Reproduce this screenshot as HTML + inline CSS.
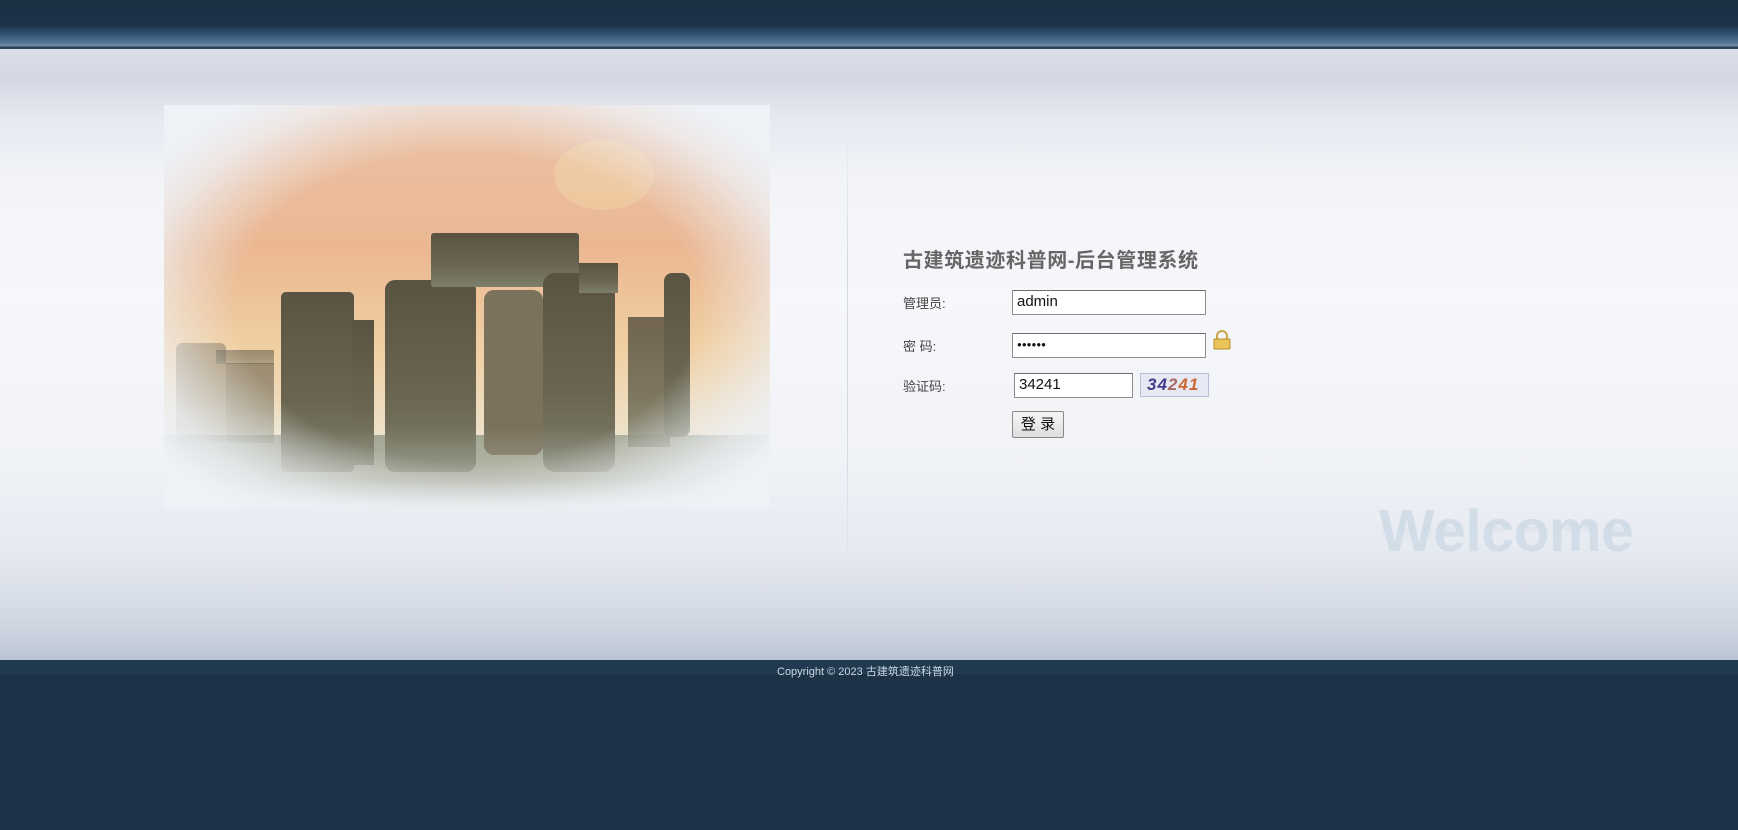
<!DOCTYPE html>
<html><head><meta charset="utf-8"><style>
*{margin:0;padding:0;box-sizing:border-box}
body{width:1738px;height:830px;overflow:hidden;background:#1d3246;font-family:"Liberation Sans","Noto Sans CJK SC",sans-serif;position:relative}
.top{position:absolute;left:0;top:0;width:1738px;height:49px;background:linear-gradient(#1c3044 0,#1d3246 25px,#2f4d6a 33px,#4f7293 42px,#6f8ea9 46px,#2c4256 47px,#2c4256 49px)}
.main{position:absolute;left:0;top:49px;width:1738px;height:611px;background:linear-gradient(#dadfe8 0,#d3d8e3 30px,#e6e9f0 70px,#f2f4f8 130px,#f6f7fa 250px,#f1f3f7 400px,#e6eaf1 500px,#d2d8e3 570px,#bcc5d4 611px)}
.div{position:absolute;left:847px;top:120px;width:1px;height:470px;background:linear-gradient(rgba(200,208,220,0),#d4dae3 30%,#d4dae3 70%,rgba(200,208,220,0))}
.foot{position:absolute;left:0;top:660px;width:1738px;height:14px;background:#223a50}
.copy{position:absolute;left:777px;top:663px;font-size:11px;color:#c9d6e2}
.title{position:absolute;left:903px;top:244px;font-size:20px;font-weight:bold;color:#666;letter-spacing:0.6px}
.lab{position:absolute;left:903px;font-size:13px;color:#444}
.inp{position:absolute;background:#fff;border:1px solid #8d8d8d;border-top-color:#6f6f6f;font-size:15px;color:#111;padding-left:4px;line-height:22px;height:25px}
.btn{position:absolute;left:1012px;top:411px;width:52px;height:27px;border:1px solid #8a8a8a;border-radius:2px;background:linear-gradient(#f6f6f6,#dedede);font-size:15px;text-align:center;line-height:25px;color:#111}
.welcome{position:absolute;left:1379px;top:497px;font-size:59px;font-weight:bold;color:#d2dde8;letter-spacing:-0.5px}
.refl{position:absolute;left:1379px;top:554px;font-size:59px;font-weight:bold;color:#cad8e6;transform:scaleY(-1);transform-origin:0 0;opacity:.5;letter-spacing:-0.5px;height:30px;overflow:hidden;-webkit-mask-image:linear-gradient(to top,rgba(0,0,0,.8),rgba(0,0,0,0) 60%)}
</style></head><body>
<div class="top"></div>
<div class="main"></div>
<div class="div"></div>
<svg style="position:absolute;left:164px;top:105px" width="606" height="403" viewBox="0 0 606 403">
<defs>
<linearGradient id="sky" x1="0" y1="0" x2="0" y2="1"><stop offset="0" stop-color="#ecc3a8"/><stop offset=".35" stop-color="#ebb792"/><stop offset=".6" stop-color="#f0cfa2"/><stop offset=".8" stop-color="#ede0c6"/><stop offset="1" stop-color="#e6e2d2"/></linearGradient>
<linearGradient id="st" x1="0" y1="0" x2="0" y2="1"><stop offset="0" stop-color="#5a5342"/><stop offset=".6" stop-color="#6a6550"/><stop offset="1" stop-color="#7d7f6a"/></linearGradient>
<radialGradient id="vig" cx=".5" cy=".5" r=".62"><stop offset=".62" stop-color="#eef1f6" stop-opacity="0"/><stop offset=".88" stop-color="#eef1f6" stop-opacity=".8"/><stop offset="1" stop-color="#eef1f6" stop-opacity="1"/></radialGradient>
<linearGradient id="fog" x1="0" y1="0" x2="0" y2="1"><stop offset=".8" stop-color="#e8ebef" stop-opacity="0"/><stop offset=".93" stop-color="#dfe3e4" stop-opacity=".3"/><stop offset="1" stop-color="#eef1f6" stop-opacity=".9"/></linearGradient>
</defs>
<rect width="606" height="403" fill="url(#sky)"/>
<ellipse cx="440" cy="70" rx="50" ry="35" fill="#f6dcaa" opacity=".4"/>
<rect x="0" y="330" width="606" height="73" fill="#a1a48e"/>
<g fill="url(#st)">
<rect x="12" y="238" width="50" height="100" rx="6" opacity=".45"/>
<rect x="52" y="245" width="58" height="14" opacity=".55"/>
<rect x="62" y="258" width="48" height="80" opacity=".55"/>
<rect x="117" y="187" width="73" height="180" rx="5"/>
<rect x="188" y="215" width="22" height="145"/>
<rect x="221" y="175" width="91" height="192" rx="10"/>
<rect x="267" y="128" width="148" height="54" rx="3"/>
<rect x="320" y="185" width="59" height="165" rx="10" fill="#7a725c"/>
<rect x="379" y="168" width="72" height="199" rx="12"/>
<rect x="415" y="158" width="39" height="30"/>
<rect x="464" y="212" width="42" height="130" opacity=".85"/>
<rect x="500" y="168" width="26" height="164" rx="8"/>
</g>
<rect width="606" height="403" fill="url(#fog)"/>
<rect width="606" height="403" fill="url(#vig)"/>
</svg>
<div class="title">古建筑遗迹科普网-后台管理系统</div>
<div class="lab" style="top:293px">管理员:</div>
<div class="inp" style="left:1012px;top:290px;width:194px">admin</div>
<div class="lab" style="top:336px">密 码:</div>
<div class="inp" style="left:1012px;top:333px;width:194px;font-size:8px;letter-spacing:0px">●●●●●●</div>
<svg style="position:absolute;left:1213px;top:330px" width="18" height="20" viewBox="0 0 18 20"><path d="M4 9V6a5 5 0 0 1 10 0v3" fill="none" stroke="#c9a445" stroke-width="2"/><rect x="1" y="9" width="16" height="10" rx="1" fill="#e8c45a" stroke="#b78e2c"/></svg>
<div class="lab" style="top:376px">验证码:</div>
<div class="inp" style="left:1014px;top:373px;width:119px">34241</div>
<div style="position:absolute;left:1140px;top:373px;width:69px;height:24px;background:#e6e9f3;border:1px solid #b8bfd4;font:italic bold 17px 'Liberation Sans';color:#443c8a;padding-left:6px;line-height:22px;letter-spacing:1px">34<span style="color:#a66">2</span><span style="color:#c63">41</span></div>
<div class="btn">登 录</div>
<div class="welcome">Welcome</div>
<div class="refl">Welcome</div>
<div class="foot"></div>
<div class="copy">Copyright © 2023 古建筑遗迹科普网</div>
</body></html>
